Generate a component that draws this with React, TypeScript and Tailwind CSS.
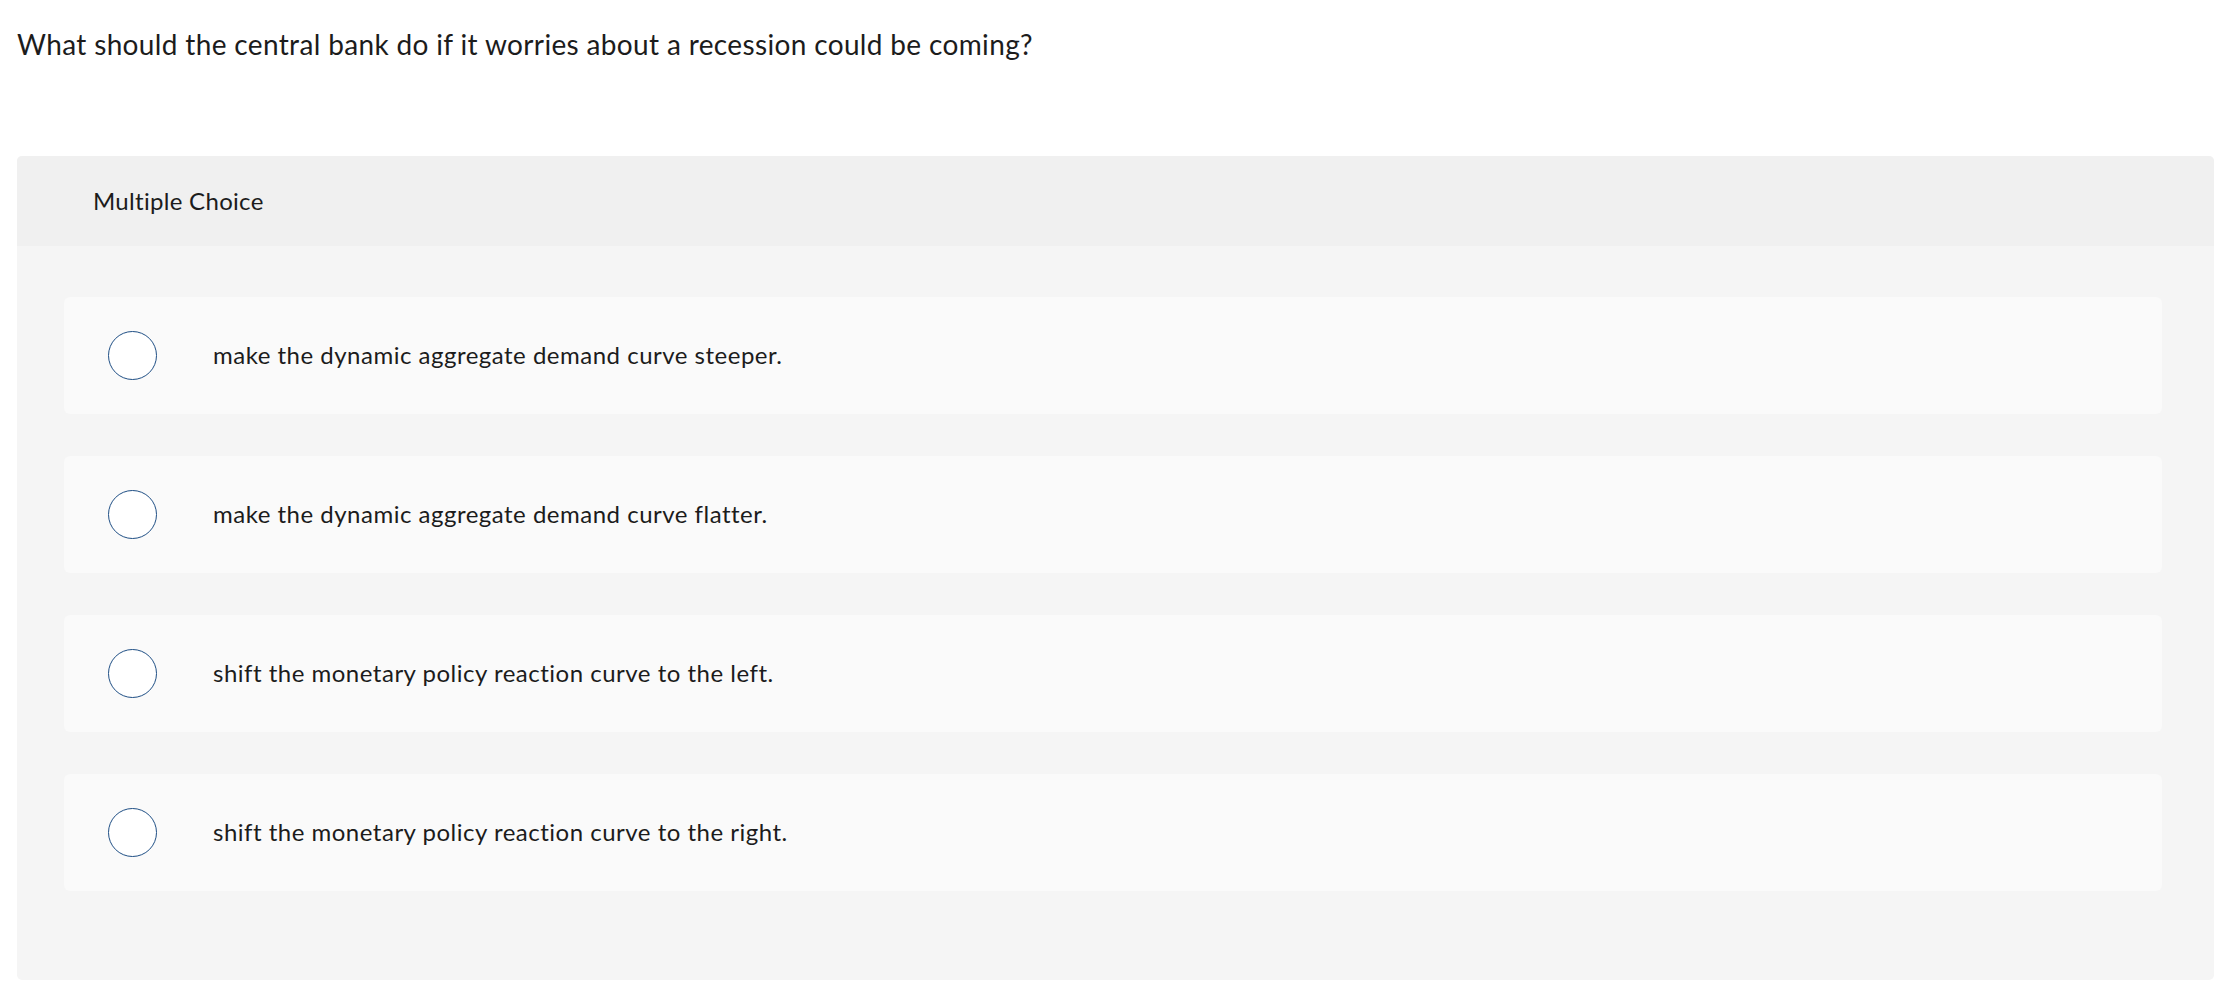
import React from 'react';

const options = [
  'make the dynamic aggregate demand curve steeper.',
  'make the dynamic aggregate demand curve flatter.',
  'shift the monetary policy reaction curve to the left.',
  'shift the monetary policy reaction curve to the right.',
];

export default function App() {
  return (
    <div className="min-h-screen bg-white text-[#1c1c1c] font-['Lato','Liberation_Sans',sans-serif]">
      <div className="pl-[17px] pt-[24px] h-[156px]">
        <p className="text-[28px] leading-[40px] tracking-[0.35px]">
          What should the central bank do if it worries about a recession could be coming?
        </p>
      </div>

      <div className="ml-[17px] mr-[9px] rounded-[5px] bg-[#f5f5f5] overflow-hidden">
        <div className="h-[90px] bg-[#f0f0f0] flex items-center pl-[76px]">
          <span className="text-[24px] tracking-[0.3px]">Multiple Choice</span>
        </div>

        <div className="pt-[51px] pb-[89px] pl-[47px] pr-[52px] flex flex-col gap-[42px]">
          {options.map((opt) => (
            <label
              key={opt}
              className="h-[117px] rounded-[6px] bg-[#fafafa] flex items-center pl-[44px] cursor-pointer"
            >
              <span className="w-[49px] h-[49px] rounded-full border-[1.5px] border-[#1f4f85] bg-white shrink-0" />
              <span className="ml-[56px] text-[24px] tracking-[0.5px] -translate-y-[1px]">{opt}</span>
            </label>
          ))}
        </div>
      </div>
    </div>
  );
}
